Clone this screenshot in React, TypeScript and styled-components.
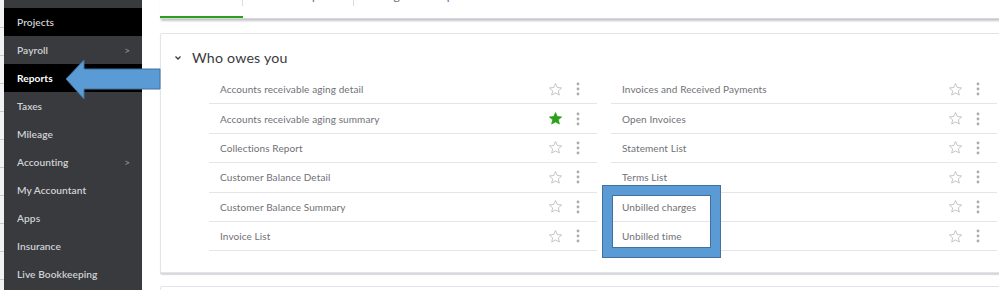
import React from "react";
import styled, { createGlobalStyle } from "styled-components";

const Global = createGlobalStyle`
  html, body { margin: 0; padding: 0; background: #ffffff; overflow: hidden; }
  body { width: 999px; height: 290px; font-family: Lato, "Open Sans", Arial, sans-serif; }
`;

const Page = styled.div`
  position: relative;
  display: flex;
  width: 999px;
  height: 290px;
  overflow: hidden;
`;

const EdgeStrip = styled.div`
  width: 4px;
  flex: 0 0 4px;
  background: repeating-linear-gradient(
    to bottom,
    #f2f2f2 0px,
    #f2f2f2 27px,
    #c9c9c9 27px,
    #c9c9c9 28px
  );
`;

const Sidebar = styled.nav`
  width: 138px;
  flex: 0 0 138px;
  background: #393a3d;
  padding-top: 8px;
  box-sizing: border-box;
`;

const NavItem = styled.div<{ $active?: boolean; $selected?: boolean }>`
  height: 28px;
  display: flex;
  align-items: center;
  justify-content: space-between;
  padding: 0 12px 0 13px;
  background: ${(p) => (p.$active ? "#000000" : "transparent")};
  color: ${(p) => (p.$selected ? "#ffffff" : "#d0d2d6")};
  font-family: Lato, Arial, sans-serif;
  font-size: 10.2px;
  font-weight: ${(p) => (p.$selected ? 700 : 600)};
  letter-spacing: 0.05px;
`;

const NavChevron = styled.span`
  color: #8d9096;
  font-size: 10px;
`;

const Main = styled.main`
  flex: 1;
  min-width: 0;
  padding-left: 18px;
  margin-right: -14px;
  display: flex;
  flex-direction: column;
`;

const TabBar = styled.div`
  flex-shrink: 0;
  display: flex;
  margin-top: -14px;
  height: 32px;
  box-shadow: 0 3px 2px -1px #c4c6ca;
  border-bottom: 1px solid #d4d7dc;
`;

const Tab = styled.div<{ $active?: boolean; $w: number }>`
  width: ${(p) => p.$w}px;
  display: flex;
  justify-content: center;
  align-items: flex-start;
  padding-top: 2px;
  box-sizing: border-box;
  font-family: Lato, Arial, sans-serif;
  font-size: 12px;
  color: ${(p) => (p.$active ? "#393a3d" : "#6b6c72")};
  border-bottom: 2px solid ${(p) => (p.$active ? "#2ca01c" : "transparent")};
  position: relative;
  &:not(:last-child)::after {
    content: "";
    position: absolute;
    right: 0;
    top: 0;
    height: 20px;
    width: 1px;
    background: #dcdde0;
  }
`;

const Card = styled.section`
  flex-shrink: 0;
  margin-top: 14px;
  height: 240px;
  border: 1px solid #e3e4e7;
  border-radius: 2px;
  box-shadow: 0 2px 1px #d6d8dc;
  background: #ffffff;
  box-sizing: border-box;
  padding: 13px 0 0 12px;
`;

const NextCard = styled.section`
  flex-shrink: 0;
  margin-top: 13px;
  height: 30px;
  border: 1px solid #e3e4e7;
  border-radius: 2px;
  background: #ffffff;
`;

const SectionHeader = styled.div`
  display: flex;
  align-items: center;
  gap: 10px;
  height: 21px;
  color: #393a3d;
  font-family: Lato, Arial, sans-serif;
  font-size: 14.2px;
  letter-spacing: 0.2px;
`;

const Chevron = styled.svg`
  width: 8px;
  height: 8px;
  margin-left: 1px;
`;

const Columns = styled.div`
  display: grid;
  grid-template-columns: 388px 386px;
  column-gap: 14px;
  margin-left: 36px;
  margin-top: 7px;
`;

const Column = styled.div`
  display: flex;
  flex-direction: column;
`;

const Row = styled.div`
  height: 28.4px;
  border-bottom: 1px solid #e3e5e8;
  display: flex;
  align-items: center;
  padding: 0 17px 0 11px;
  color: #707176;
  font-family: Lato, Arial, sans-serif;
  font-size: 10px;
  letter-spacing: 0.1px;
`;

const RowLabel = styled.span`
  flex: 1;
`;

const Actions = styled.div`
  display: flex;
  align-items: center;
  gap: 13px;
`;

const StarSvg = styled.svg`
  width: 15px;
  height: 15px;
`;

const DotsSvg = styled.svg`
  width: 4px;
  height: 14px;
`;

const Highlight = styled.div`
  position: absolute;
  left: 603px;
  top: 186px;
  width: 117px;
  height: 71px;
  box-sizing: border-box;
  border: 9px solid #5b9bd5;
  outline: 1px solid #41719c;
  box-shadow: inset 0 0 0 1px #41719c;
  pointer-events: none;
`;

const ArrowSvg = styled.svg`
  position: absolute;
  left: 65px;
  top: 59px;
  width: 96px;
  height: 41px;
  pointer-events: none;
`;

const Star = ({ filled }: { filled?: boolean }) => (
  <StarSvg viewBox="0 0 24 24">
    <path
      d="M12 2.5l2.9 6.3 6.9.7-5.2 4.6 1.5 6.8L12 17.4l-6.1 3.5 1.5-6.8-5.2-4.6 6.9-.7z"
      fill={filled ? "#2ca01c" : "none"}
      stroke={filled ? "#2ca01c" : "#b5b8bd"}
      strokeWidth={filled ? 1.2 : 1.3}
      strokeLinejoin="round"
    />
  </StarSvg>
);

const Dots = () => (
  <DotsSvg viewBox="0 0 4 14">
    <circle cx="2" cy="2" r="1.4" fill="#a8abb1" />
    <circle cx="2" cy="7" r="1.4" fill="#a8abb1" />
    <circle cx="2" cy="12" r="1.4" fill="#a8abb1" />
  </DotsSvg>
);

const navItems: { label: string; chevron?: boolean; active?: boolean; selected?: boolean }[] = [
  { label: "Projects", active: true },
  { label: "Payroll", chevron: true },
  { label: "Reports", active: true, selected: true },
  { label: "Taxes" },
  { label: "Mileage" },
  { label: "Accounting", chevron: true },
  { label: "My Accountant" },
  { label: "Apps" },
  { label: "Insurance" },
  { label: "Live Bookkeeping" },
];

const leftReports = [
  { label: "Accounts receivable aging detail" },
  { label: "Accounts receivable aging summary", fav: true },
  { label: "Collections Report" },
  { label: "Customer Balance Detail" },
  { label: "Customer Balance Summary" },
  { label: "Invoice List" },
];

const rightReports = [
  { label: "Invoices and Received Payments" },
  { label: "Open Invoices" },
  { label: "Statement List" },
  { label: "Terms List" },
  { label: "Unbilled charges" },
  { label: "Unbilled time" },
];

const ReportColumn = ({ items }: { items: { label: string; fav?: boolean }[] }) => (
  <Column>
    {items.map((r) => (
      <Row key={r.label}>
        <RowLabel>{r.label}</RowLabel>
        <Actions>
          <Star filled={r.fav} />
          <Dots />
        </Actions>
      </Row>
    ))}
  </Column>
);

export default function App() {
  return (
    <>
      <Global />
      <Page>
        <EdgeStrip />
        <Sidebar>
          {navItems.map((n) => (
            <NavItem key={n.label} $active={n.active} $selected={n.selected}>
              <span>{n.label}</span>
              {n.chevron && <NavChevron>&gt;</NavChevron>}
            </NavItem>
          ))}
        </Sidebar>
        <Main>
          <TabBar>
            <Tab $active $w={83}>Standard</Tab>
            <Tab $w={111}>Custom reports</Tab>
            <Tab $w={130}>Management reports</Tab>
          </TabBar>
          <Card>
            <SectionHeader>
              <Chevron viewBox="0 0 8 8">
                <path d="M1.5 2.5L4 5l2.5-2.5" fill="none" stroke="#393a3d" strokeWidth="1.3" />
              </Chevron>
              <span>Who owes you</span>
            </SectionHeader>
            <Columns>
              <ReportColumn items={leftReports} />
              <ReportColumn items={rightReports} />
            </Columns>
          </Card>
          <NextCard />
        </Main>
        <ArrowSvg viewBox="0 0 96 41">
          <polygon
            points="1,20 19,1 19,10 95,10 95,30 19,30 19,40"
            fill="#5b9bd5"
            stroke="#41719c"
            strokeWidth="1"
          />
        </ArrowSvg>
        <Highlight />
      </Page>
    </>
  );
}
